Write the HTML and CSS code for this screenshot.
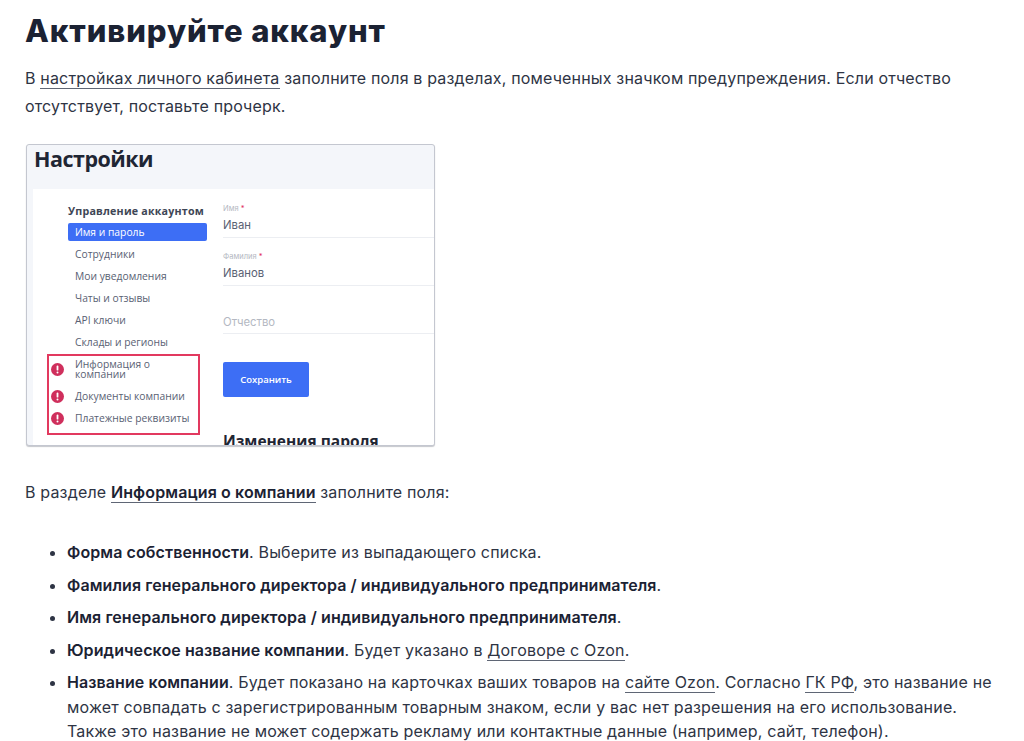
FILE: index.html
```html
<!DOCTYPE html>
<html lang="ru">
<head>
<meta charset="utf-8">
<title>Активируйте аккаунт</title>
<link rel="stylesheet" href="styles.css">
</head>
<body>
<main class="article">
  <h1 class="title">Активируйте аккаунт</h1>
  <p class="lead">В <a class="link" href="#">настройках личного кабинета</a> заполните поля в разделах, помеченных значком предупреждения. Если отчество отсутствует, поставьте прочерк.</p>

  <div class="shot">
    <div class="shot-head">Настройки</div>
    <div class="shot-body">
      <nav class="side">
        <div class="side-title">Управление аккаунтом</div>
        <div class="side-item active">Имя и пароль</div>
        <div class="side-item">Сотрудники</div>
        <div class="side-item">Мои уведомления</div>
        <div class="side-item">Чаты и отзывы</div>
        <div class="side-item">API ключи</div>
        <div class="side-item">Склады и регионы</div>
        <div class="side-item tall">
          <svg class="warn-icon" viewBox="0 0 13 13"><circle cx="6.5" cy="6.5" r="6.5" fill="#cf2f5c"/><rect x="5.6" y="2.6" width="1.8" height="5" rx=".9" fill="#fff"/><circle cx="6.5" cy="9.6" r="1" fill="#fff"/></svg>
          Информация о компании</div>
        <div class="side-item">
          <svg class="warn-icon" viewBox="0 0 13 13"><circle cx="6.5" cy="6.5" r="6.5" fill="#cf2f5c"/><rect x="5.6" y="2.6" width="1.8" height="5" rx=".9" fill="#fff"/><circle cx="6.5" cy="9.6" r="1" fill="#fff"/></svg>
          Документы компании</div>
        <div class="side-item">
          <svg class="warn-icon" viewBox="0 0 13 13"><circle cx="6.5" cy="6.5" r="6.5" fill="#cf2f5c"/><rect x="5.6" y="2.6" width="1.8" height="5" rx=".9" fill="#fff"/><circle cx="6.5" cy="9.6" r="1" fill="#fff"/></svg>
          Платежные реквизиты</div>
        <div class="red-box"></div>
      </nav>
      <section class="form">
        <div class="field">
          <div class="field-label">Имя <span class="star">*</span></div>
          <div class="field-value">Иван</div>
        </div>
        <div class="field">
          <div class="field-label">Фамилия <span class="star">*</span></div>
          <div class="field-value">Иванов</div>
        </div>
        <div class="field third">
          <div class="field-value empty">Отчество</div>
        </div>
        <div class="save">Сохранить</div>
        <div class="form-title">Изменения пароля</div>
      </section>
    </div>
  </div>

  <p class="section">В разделе <a class="link strong" href="#">Информация о компании</a> заполните поля:</p>

  <ul class="fields">
    <li><b>Форма собственности</b>. Выберите из выпадающего списка.</li>
    <li><b>Фамилия генерального директора / индивидуального предпринимателя</b>.</li>
    <li><b>Имя генерального директора / индивидуального предпринимателя</b>.</li>
    <li><b>Юридическое название компании</b>. Будет указано в <a class="link" href="#">Договоре с Ozon</a>.</li>
    <li><b>Название компании</b>. Будет показано на карточках ваших товаров на <a class="link" href="#">сайте Ozon</a>. Согласно <a class="link" href="#">ГК РФ</a>, это название не может совпадать с зарегистрированным товарным знаком, если у вас нет разрешения на его использование. Также это название не может содержать рекламу или контактные данные (например, сайт, телефон).</li>
  </ul>
</main>
</body>
</html>
```

FILE: styles.css
```css
html, body {
  margin: 0;
  height: 741px;
  overflow: hidden;
  background: #fff;
}
body {
  font-family: Inter, "Noto Sans", sans-serif;
  font-size: 16px;
  letter-spacing: .17px;
  color: #2e3444;
}
.article {
  padding: 13px 25px 0;
  width: 974px;
}
.title {
  margin: 0;
  font-family: Inter, sans-serif;
  font-weight: 800;
  font-size: 31px;
  line-height: 36px;
  letter-spacing: .9px;
  color: #1b2233;
}
.lead {
  margin: 15px 0 0;
  line-height: 28px;
}
.link {
  color: inherit;
  text-decoration: none;
  border-bottom: 1px solid #5f6675;
}
.strong {
  font-weight: 600;
  letter-spacing: .12px;
  color: #1b2233;
}
.shot {
  position: relative;
  margin: 24px 0 0 1px;
  width: 407px;
  height: 300px;
  border: 1px solid #c4c7d0;
  border-radius: 3px;
  background: #f4f6fa;
  box-shadow: 0 1px 1px rgba(90, 95, 110, .35);
  overflow: hidden;
  font-family: "Open Sans", sans-serif;
  letter-spacing: 0;
}
.shot-head {
  height: 44px;
  padding-left: 7px;
  font-size: 21.5px;
  font-weight: 700;
  line-height: 28px;
  letter-spacing: -.5px;
  color: #1f2634;
}
.shot-body {
  display: flex;
  margin-left: 6px;
  height: 256px;
  background: #fff;
}
.side {
  position: relative;
  width: 155px;
  padding-left: 35px;
  padding-top: 15px;
  flex: none;
}
.side-title {
  font-size: 10.7px;
  font-weight: 700;
  line-height: 15px;
  letter-spacing: .2px;
  color: #3e4655;
}
.side-item {
  position: relative;
  width: 139px;
  height: 18px;
  margin-bottom: 4px;
  padding-left: 7px;
  box-sizing: border-box;
  font-size: 10.3px;
  line-height: 18px;
  color: #596173;
}
.active {
  margin-top: 4px;
  background: #3d6ef5;
  border-radius: 2px;
  color: #fff;
}
.tall {
  height: 28px;
  line-height: 10px;
  padding-top: 4px;
  padding-right: 20px;
}
.warn-icon {
  position: absolute;
  left: -17px;
  top: 2.5px;
  width: 13px;
  height: 13px;
}
.tall .warn-icon {
  top: 7.5px;
}
.red-box {
  position: absolute;
  left: 14px;
  top: 165px;
  width: 149px;
  height: 77px;
  border: 2px solid #e2395f;
}
.form {
  padding-top: 15px;
  flex: 1;
  min-width: 0;
}
.field {
  margin-bottom: 14px;
  padding-bottom: 3px;
  border-bottom: 1px solid #eceef2;
}
.third {
  margin-top: 27px;
  margin-bottom: 28px;
  padding-bottom: 2px;
}
.field-label {
  height: 10px;
  font-family: Inter, sans-serif;
  font-size: 7.5px;
  line-height: 10px;
  color: #b4b8c2;
}
.star {
  color: #e0315f;
}
.field-value {
  margin-top: 2px;
  font-family: Inter, sans-serif;
  font-size: 11.3px;
  line-height: 18px;
  color: #596173;
}
.empty {
  margin-top: 0;
  color: #b4b8c2;
}
.save {
  width: 86px;
  height: 35px;
  background: #3d6ef5;
  border-radius: 2px;
  color: #fff;
  font-size: 9.5px;
  font-weight: 600;
  line-height: 35px;
  text-align: center;
}
.form-title {
  margin-top: 34px;
  font-size: 15.5px;
  font-weight: 700;
  line-height: 20px;
  white-space: nowrap;
  color: #1f2634;
}
.section {
  margin: 32px 0 0;
  line-height: 28px;
}
.fields {
  margin: 34px 0 0;
  padding: 0 0 0 42px;
  line-height: 24.5px;
}
.fields li {
  margin-bottom: 8px;
}
.fields b {
  font-weight: 600;
  letter-spacing: .09px;
  color: #1b2233;
}
```
